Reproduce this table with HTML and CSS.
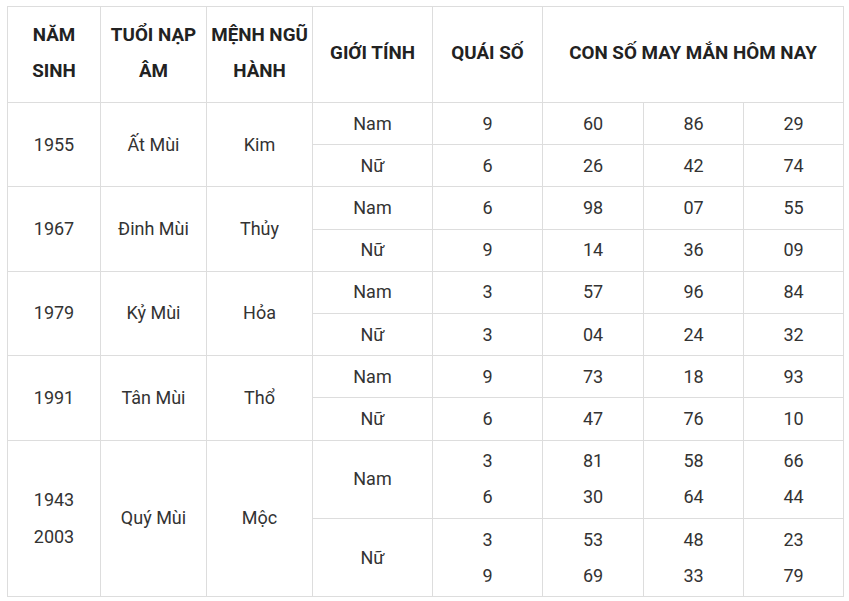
FILE: index.html
```html
<!DOCTYPE html>
<html lang="vi">
<head>
<meta charset="utf-8">
<link rel="stylesheet" href="styles.css">
</head>
<body>
<div class="wrap">
<table class="lucky">
  <colgroup>
    <col class="c1"><col class="c2"><col class="c3"><col class="c4"><col class="c5"><col class="c6"><col class="c7"><col class="c8">
  </colgroup>
  <thead>
    <tr>
      <th>NĂM<br>SINH</th>
      <th>TUỔI NẠP<br>ÂM</th>
      <th>MỆNH NGŨ<br>HÀNH</th>
      <th>GIỚI TÍNH</th>
      <th>QUÁI SỐ</th>
      <th colspan="3">CON SỐ MAY MẮN HÔM NAY</th>
    </tr>
  </thead>
  <tbody>
    <tr><td rowspan="2">1955</td><td rowspan="2">Ất Mùi</td><td rowspan="2">Kim</td><td>Nam</td><td>9</td><td>60</td><td>86</td><td>29</td></tr>
    <tr><td>Nữ</td><td>6</td><td>26</td><td>42</td><td>74</td></tr>
    <tr><td rowspan="2">1967</td><td rowspan="2">Đinh Mùi</td><td rowspan="2">Thủy</td><td>Nam</td><td>6</td><td>98</td><td>07</td><td>55</td></tr>
    <tr><td>Nữ</td><td>9</td><td>14</td><td>36</td><td>09</td></tr>
    <tr><td rowspan="2">1979</td><td rowspan="2">Kỷ Mùi</td><td rowspan="2">Hỏa</td><td>Nam</td><td>3</td><td>57</td><td>96</td><td>84</td></tr>
    <tr><td>Nữ</td><td>3</td><td>04</td><td>24</td><td>32</td></tr>
    <tr><td rowspan="2">1991</td><td rowspan="2">Tân Mùi</td><td rowspan="2">Thổ</td><td>Nam</td><td>9</td><td>73</td><td>18</td><td>93</td></tr>
    <tr><td>Nữ</td><td>6</td><td>47</td><td>76</td><td>10</td></tr>
    <tr><td rowspan="2">1943<br>2003</td><td rowspan="2">Quý Mùi</td><td rowspan="2">Mộc</td><td>Nam</td><td>3<br>6</td><td>81<br>30</td><td>58<br>64</td><td>66<br>44</td></tr>
    <tr><td>Nữ</td><td>3<br>9</td><td>53<br>69</td><td>48<br>33</td><td>23<br>79</td></tr>
  </tbody>
</table>
</div>
</body>
</html>
```

FILE: styles.css
```css
html, body {
  margin: 0;
  padding: 0;
  background: #fff;
}
.wrap {
  padding: 6px 0 0 7px;
}
.lucky {
  border-collapse: collapse;
  width: 836px;
  table-layout: fixed;
  font-family: Roboto, "Noto Sans", sans-serif;
  font-size: 18px;
  color: #333;
}
.c1 { width: 93px; }
.c2 { width: 106px; }
.c3 { width: 106px; }
.c4 { width: 120px; }
.c5 { width: 110px; }
.c6 { width: 101px; }
.c7 { width: 100px; }
.c8 { width: 100px; }
.lucky th, .lucky td {
  border: 1px solid #dddddd;
  text-align: center;
  vertical-align: middle;
  padding: 2.5px 0;
  line-height: 36.2px;
}
.lucky th {
  font-weight: 700;
  font-size: 18.8px;
  color: #222;
  padding: 10px 0 13px;
  line-height: 36px;
  white-space: nowrap;
}
```
